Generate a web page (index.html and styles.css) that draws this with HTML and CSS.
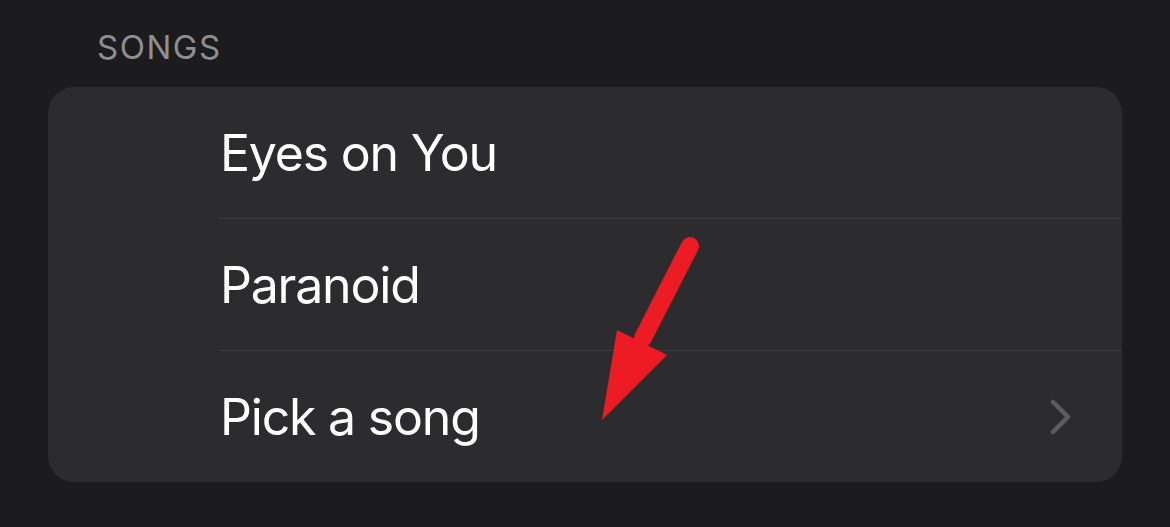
FILE: index.html
```html
<!DOCTYPE html>
<html lang="en">
<head>
    <meta charset="UTF-8">
    <meta name="viewport" content="width=device-width, initial-scale=1.0">
    <title>Songs</title>
    <link rel="stylesheet" href="styles.css">
</head>
<body>
    <section class="group">
        <div class="group-title">SONGS</div>
        <div class="card">
            <div class="row">
                <div class="row-inner">
                    <span class="label">Eyes on You</span>
                </div>
            </div>
            <div class="row">
                <div class="row-inner">
                    <span class="label">Paranoid</span>
                </div>
            </div>
            <div class="row">
                <div class="row-inner">
                    <span class="label">Pick a song</span>
                    <svg class="chevron" width="22" height="36" viewBox="0 0 22 36">
                        <path d="M3 3 L18 18 L3 33" fill="none" stroke="#5b5b60" stroke-width="4.5" stroke-linecap="round" stroke-linejoin="round"/>
                    </svg>
                </div>
            </div>
        </div>
        <!-- annotation arrow drawn over the list -->
        <svg class="arrow" width="1170" height="527" viewBox="0 0 1170 527">
            <line x1="690" y1="246" x2="643" y2="338" stroke="#ed1c24" stroke-width="18" stroke-linecap="round"/>
            <polygon points="617,330 667,355 602,420" fill="#ed1c24"/>
        </svg>
    </section>
</body>
</html>
```

FILE: styles.css
```css
body {
    margin: 0;
    background-color: #1c1c1e;
    font-family: Inter, "Noto Sans", sans-serif;
    color: #fff;
    height: 527px;
    overflow: hidden;
}

.group {
    position: relative;
    padding: 27px 48px 0 48px;
}

.group-title {
    font-size: 33px;
    line-height: 40px;
    letter-spacing: 1.5px;
    color: #8e8e93;
    padding-left: 49px;
    margin-bottom: 20px;
}

.card {
    background-color: #2c2c2e;
    border-radius: 26px;
    overflow: hidden;
}

.row-inner {
    margin-left: 171px;
    height: 131px;
    display: flex;
    align-items: center;
    justify-content: space-between;
    padding-right: 50px;
    border-bottom: 1px solid #3e3e41;
}

.row:last-child .row-inner {
    border-bottom: none;
}

.label {
    font-size: 50px;
    letter-spacing: -1.2px;
    padding-left: 1px;
}

.chevron {
    display: block;
}

.arrow {
    position: absolute;
    left: 0;
    top: 0;
    pointer-events: none;
}
```
